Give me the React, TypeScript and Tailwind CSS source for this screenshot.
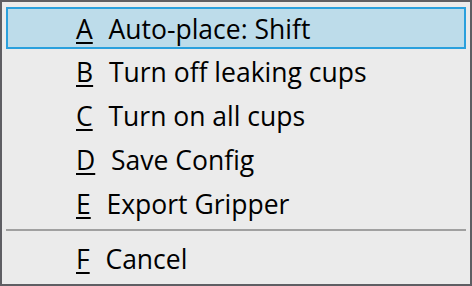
import React from "react";

const items = [
  { k: "A", t: "Auto-place: Shift", active: true },
  { k: "B", t: "Turn off leaking cups" },
  { k: "C", t: "Turn on all cups" },
  { k: "D", t: "Save Config" },
  { k: "E", t: "Export Gripper" },
];

function Item({ k, t, active }: { k: string; t: string; active?: boolean }) {
  return (
    <div
      className={
        "h-[42px] my-[1px] flex items-center pl-[68px] pt-[2px] whitespace-pre text-[26.5px] leading-none text-black border-2 " +
        (active ? "bg-[#bddcea] border-[#2aa0dd]" : "border-transparent")
      }
    >
      <span className="underline decoration-[1.5px] underline-offset-[3px] mr-[2px]">{k}</span>
      <span>{"  " + t}</span>
    </div>
  );
}

export default function App() {
  return (
    <div
      className="w-[472px] h-[286px] bg-[#ebebeb] border-2 border-[#5e5e63] px-[4px] pt-[4px] pb-[4px] flex flex-col"
      style={{ fontFamily: '"Open Sans", "Noto Sans", sans-serif' }}
    >
      {items.map((it) => (
        <Item key={it.k} k={it.k} t={it.t} active={it.active} />
      ))}
      <div className="h-[2px] bg-[#a0a0a0] mt-[4px] mb-[5px]" />
      <Item k="F" t="Cancel" />
    </div>
  );
}
